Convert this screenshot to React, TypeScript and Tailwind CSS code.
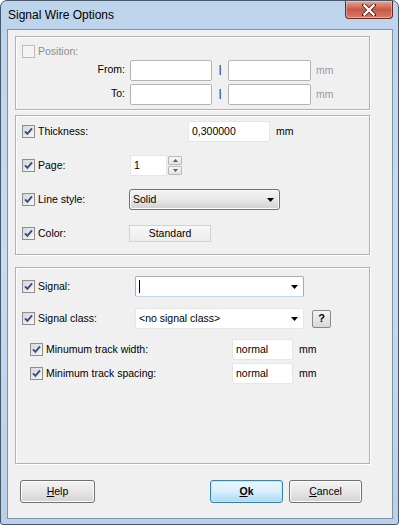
import React from "react";

const font = "font-['Liberation_Sans',Arial,sans-serif]";

function Check({ disabled = false }: { disabled?: boolean }) {
  if (disabled) {
    return <span className="block w-[13px] h-[13px] shrink-0 border border-[#bcbcbc] bg-[#f4f4f4]" />;
  }
  return (
    <span className="flex w-[13px] h-[13px] shrink-0 border border-[#8e8f8f] bg-gradient-to-br from-[#d3d6db] to-[#f7f7f7]">
      <svg width="11" height="11" viewBox="0 0 11 11">
        <path d="M2 5.3 L4.4 7.8 L9 2.4" fill="none" stroke="#3a4d7e" strokeWidth="1.9" />
      </svg>
    </span>
  );
}

function Arrow() {
  return (
    <svg width="7" height="4" viewBox="0 0 7 4" className="shrink-0">
      <polygon points="0,0 7,0 3.5,4" fill="#000" />
    </svg>
  );
}

function Close() {
  return (
    <div className="ml-auto w-[48px] h-[18px] mt-0 rounded-b-[4px] border border-t-0 border-[#6d2a22] bg-gradient-to-b from-[#e5a597] via-[#c9584a] to-[#d97b66] flex items-center justify-center shadow-[inset_0_0_0_1px_rgba(255,255,255,0.35)]">
      <svg width="14" height="12" viewBox="0 0 14 12">
        <path d="M2 1 L12 11 M12 1 L2 11" stroke="#5b1e17" strokeWidth="4" strokeLinecap="square" />
        <path d="M2.5 1.5 L11.5 10.5 M11.5 1.5 L2.5 10.5" stroke="#ffffff" strokeWidth="2.4" strokeLinecap="square" />
      </svg>
    </div>
  );
}

function Btn({ children, ok = false, w }: { children: React.ReactNode; ok?: boolean; w: string }) {
  return (
    <div
      className={
        ok
          ? `${w} h-[23px] rounded-[3px] border border-[#3c7fb1] bg-gradient-to-b from-[#eaf6fd] via-[#d9f0fc] to-[#a7d9f5] shadow-[inset_0_0_0_1px_#c4e5f6] flex items-center justify-center text-[10.5px] text-black`
          : `${w} h-[23px] rounded-[3px] border border-[#707070] bg-gradient-to-b from-[#f2f2f2] via-[#e6e6e6] to-[#d3d3d3] shadow-[inset_0_0_0_1px_#fcfcfc] flex items-center justify-center text-[10.5px] text-black`
      }
    >
      {children}
    </div>
  );
}

export default function App() {
  return (
    <div className="w-[399px] h-[525px] bg-white">
      <div
        className={`w-[399px] h-[525px] rounded-t-[7px] rounded-b-[3px] border border-[#47586a] bg-gradient-to-b from-[#bcd4ec] via-[#c8dcf0] to-[#b8d0e8] flex flex-col ${font}`}
      >
        <div className="h-[28px] flex items-start pl-[6px] pr-[5px] shrink-0">
          <span className="mt-[7px] ml-[1px] text-[12px] leading-[14px] text-black">Signal Wire Options</span>
          <Close />
        </div>
        <div className="ml-[6px] w-[386px] h-[490px] border border-[#7f93a6] bg-[#f0f0f0] flex flex-col text-[10.5px] leading-[13px] text-black">
          {/* Group 1 */}
          <div className="ml-[7px] mt-[6px] w-[355px] h-[74px] border border-[#b0b0b0] shadow-[inset_1px_1px_0_#ffffff,1px_1px_0_#ffffff] flex flex-col shrink-0">
            <div className="ml-[6px] mt-[8px] h-[13px] flex items-center">
              <Check disabled />
              <span className="ml-[3px] text-[#8d8d8d]">Position:</span>
            </div>
            <div className="mt-[2px] h-[21px] flex items-center">
              <span className="w-[109px] text-right pb-[2px]">From:</span>
              <div className="ml-[5px] w-[82px] h-[21px] bg-white border border-[#b4b4b4] rounded-[2px]" />
              <span className="w-[16px] text-center pb-[2px]">|</span>
              <div className="w-[83px] h-[21px] bg-white border border-[#b4b4b4] rounded-[2px]" />
              <span className="ml-[5px] text-[#9a9a9a] pb-[1px]">mm</span>
            </div>
            <div className="mt-[3px] h-[21px] flex items-center">
              <span className="w-[109px] text-right pb-[2px]">To:</span>
              <div className="ml-[5px] w-[82px] h-[21px] bg-white border border-[#b4b4b4] rounded-[2px]" />
              <span className="w-[16px] text-center pb-[2px]">|</span>
              <div className="w-[83px] h-[21px] bg-white border border-[#b4b4b4] rounded-[2px]" />
              <span className="ml-[5px] text-[#9a9a9a] pb-[1px]">mm</span>
            </div>
          </div>

          {/* Group 2 */}
          <div className="ml-[7px] mt-[5px] w-[355px] h-[140px] border border-[#b0b0b0] shadow-[inset_1px_1px_0_#ffffff,1px_1px_0_#ffffff] flex flex-col shrink-0">
            <div className="ml-[6px] mt-[5px] h-[21px] flex items-center">
              <Check />
              <span className="ml-[3px] w-[150px]">Thickness:</span>
              <div className="w-[82px] h-[21px] bg-white border border-[#e6e6e6] rounded-[2px] flex items-center pl-[3px]">0,300000</div>
              <span className="ml-[6px]">mm</span>
            </div>
            <div className="ml-[6px] mt-[13px] h-[21px] flex items-center">
              <Check />
              <span className="ml-[3px] w-[92px]">Page:</span>
              <div className="w-[37px] h-[21px] bg-white border border-[#e6e6e6] rounded-[2px] flex items-center pl-[3px]">1</div>
              <div className="ml-[1px] w-[14px] h-[21px] flex flex-col gap-[1px] pt-[1px]">
                <div className="h-[9px] border border-[#b8b8b8] rounded-[1px] bg-gradient-to-b from-[#f6f6f6] to-[#e2e2e2] flex items-center justify-center">
                  <svg width="5" height="3" viewBox="0 0 5 3"><polygon points="2.5,0 5,3 0,3" fill="#4f5b6b" /></svg>
                </div>
                <div className="h-[9px] border border-[#b8b8b8] rounded-[1px] bg-gradient-to-b from-[#f6f6f6] to-[#e2e2e2] flex items-center justify-center">
                  <svg width="5" height="3" viewBox="0 0 5 3"><polygon points="0,0 5,0 2.5,3" fill="#4f5b6b" /></svg>
                </div>
              </div>
            </div>
            <div className="ml-[6px] mt-[13px] h-[21px] flex items-center">
              <Check />
              <span className="ml-[3px] w-[91px]">Line style:</span>
              <div className="w-[151px] h-[21px] rounded-[3px] border border-[#707070] bg-gradient-to-b from-[#f3f3f3] via-[#e8e8e8] to-[#d0d0d0] shadow-[inset_0_0_0_1px_#fbfbfb] flex items-center pl-[3px] pr-[5px]">
                <span className="flex-1">Solid</span>
                <Arrow />
              </div>
            </div>
            <div className="ml-[6px] mt-[13px] h-[21px] flex items-center">
              <Check />
              <span className="ml-[3px] w-[91px]">Color:</span>
              <div className="w-[82px] h-[17px] border border-[#d2d2d2] bg-gradient-to-b from-[#f8f8f8] to-[#ececec] flex items-center justify-center">Standard</div>
            </div>
          </div>

          {/* Group 3 */}
          <div className="ml-[7px] mt-[12px] w-[355px] h-[197px] border border-[#b0b0b0] shadow-[inset_1px_1px_0_#ffffff,1px_1px_0_#ffffff] flex flex-col shrink-0">
            <div className="ml-[6px] mt-[8px] h-[21px] flex items-center">
              <Check />
              <span className="ml-[3px] w-[97px]">Signal:</span>
              <div className="w-[169px] h-[21px] bg-white border border-[#abadb3] border-r-[#7eb4ea] border-b-[#c3d8ee] rounded-[2px] flex items-center pl-[3px] pr-[5px]">
                <span className="w-[1px] h-[13px] bg-black" />
                <span className="flex-1" />
                <Arrow />
              </div>
            </div>
            <div className="ml-[6px] mt-[11px] h-[21px] flex items-center">
              <Check />
              <span className="ml-[3px] w-[97px]">Signal class:</span>
              <div className="w-[169px] h-[21px] bg-white border border-[#e6e6e6] rounded-[2px] flex items-center pl-[3px] pr-[5px]">
                <span className="flex-1">&lt;no signal class&gt;</span>
                <Arrow />
              </div>
              <div className="ml-[8px] w-[19px] h-[18px] rounded-[2px] border border-[#8a8a8a] bg-gradient-to-b from-[#f4f4f4] to-[#d8d8d8] flex items-center justify-center font-bold text-[11px]">?</div>
            </div>
            <div className="ml-[14px] mt-[10px] h-[21px] flex items-center">
              <Check />
              <span className="ml-[3px] w-[186px]">Minumum track width:</span>
              <div className="w-[61px] h-[21px] bg-white border border-[#e6e6e6] rounded-[2px] flex items-center pl-[3px]">normal</div>
              <span className="ml-[6px]">mm</span>
            </div>
            <div className="ml-[14px] mt-[3px] h-[21px] flex items-center">
              <Check />
              <span className="ml-[3px] w-[186px]">Minimum track spacing:</span>
              <div className="w-[61px] h-[21px] bg-white border border-[#e6e6e6] rounded-[2px] flex items-center pl-[3px]">normal</div>
              <span className="ml-[6px]">mm</span>
            </div>
          </div>

          {/* Buttons */}
          <div className="mt-[16px] h-[23px] flex items-center">
            <div className="ml-[12px]">
              <Btn w="w-[75px]">
                <span><span className="underline">H</span>elp</span>
              </Btn>
            </div>
            <div className="ml-[115px]">
              <Btn ok w="w-[73px]">
                <span className="font-bold"><span className="underline">O</span>k</span>
              </Btn>
            </div>
            <div className="ml-[6px]">
              <Btn w="w-[73px]">
                <span><span className="underline">C</span>ancel</span>
              </Btn>
            </div>
          </div>
        </div>
      </div>
    </div>
  );
}
